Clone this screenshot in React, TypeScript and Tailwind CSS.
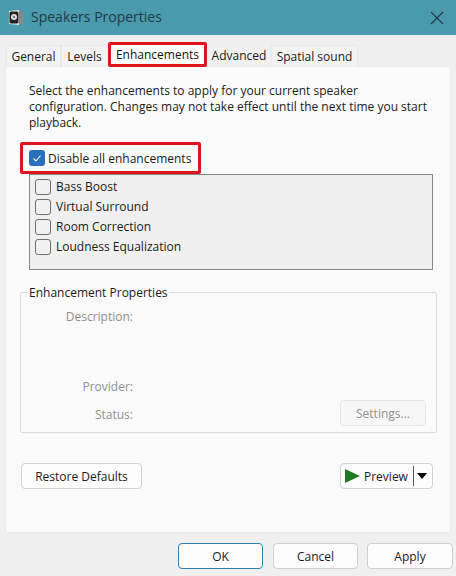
const font = { fontFamily: '"Open Sans", sans-serif' };

function Tab({ label, w }: { label: string; w: string }) {
  return (
    <div className={`${w} h-[21px] pt-[1px] flex items-center justify-center bg-[#f3f3f3] border border-b-0 border-[#e8e8e8] text-[12px] text-[#1a1a1a]`}>
      {label}
    </div>
  );
}

function Box({ label }: { label: string }) {
  return (
    <div className="flex items-center gap-[5px] h-[20px]">
      <div className="w-[16px] h-[16px] rounded-[3px] border border-[#6f6f6f] bg-[#f1f1f1]" />
      <span className="text-[12px] text-[#1a1a1a]">{label}</span>
    </div>
  );
}

function Btn({ label, w, cls = "" }: { label: string; w: string; cls?: string }) {
  return (
    <div className={`${w} h-[26px] pt-[1px] flex items-center justify-center rounded-[4px] border border-[#d0d0d0] bg-[#fdfdfd] text-[12px] text-[#1a1a1a] ${cls}`}>
      {label}
    </div>
  );
}

function Prop({ label, h }: { label: string; h: string }) {
  return (
    <div className={`${h} w-[112px] text-right text-[12px] text-[#8f8f8f]`}>{label}</div>
  );
}

export default function App() {
  return (
    <div className="w-[456px] h-[576px] flex flex-col bg-[#f0f0f0] overflow-hidden" style={font}>
      <div className="h-[35px] shrink-0 bg-[#4a9aae] flex items-center pl-[9px] pr-[12px]">
        <svg width="15" height="17" viewBox="0 0 15 17">
          <path d="M0 2 L10 1 L10 16 L0 15 Z" fill="#e8e8e8" />
          <path d="M10 1 L15 3 L15 14 L10 16 Z" fill="#7d8a8e" />
          <rect x="0.5" y="2.5" width="9" height="12" rx="1.5" fill="#222" />
          <circle cx="5" cy="8" r="3" fill="#dcdcdc" />
          <circle cx="5" cy="8" r="1" fill="#555" />
        </svg>
        <span className="ml-[7px] mb-[2px] text-[14px] text-[#1e3b45] flex-1">Speakers Properties</span>
        <svg width="14" height="14" viewBox="0 0 14 14" stroke="#1f3a44" strokeWidth="1.2" fill="none">
          <path d="M1 1 L13 13 M13 1 L1 13" />
        </svg>
      </div>
      <div className="flex-1 flex flex-col pl-[5px] pr-[5px]">
        <div className="h-[31px] flex items-end pl-[1px] shrink-0">
          <Tab label="General" w="w-[55px]" />
          <Tab label="Levels" w="w-[47px]" />
          <div className="w-[99px] h-[25px] mb-[-1px] flex items-center justify-center border-[3px] border-[#e0141c] rounded-[2px] bg-white text-[12px] text-[#111] z-10">
            Enhancements
          </div>
          <div className="w-[64px] h-[21px] pt-[1px] flex items-center justify-center text-[12px] text-[#1a1a1a]">Advanced</div>
          <Tab label="Spatial sound" w="w-[87px]" />
        </div>
        <div className="h-[467px] shrink-0 bg-[#fafafa] border border-[#ececec] pl-[23px] pt-[16px] flex flex-col">
          <p className="text-[12px] leading-[16px] text-[#1a1a1a] w-[408px]">
            Select the enhancements to apply for your current speaker configuration. Changes may not take effect until the next time you start playback.
          </p>
          <div className="mt-[11px] -ml-[9px] w-[181px] h-[32px] shrink-0 flex items-center gap-[3px] pl-[6px] border-[3px] border-[#e0141c] rounded-[2px]">
            <div className="w-[16px] h-[16px] rounded-[3px] bg-[#2a6fba] flex items-center justify-center">
              <svg width="10" height="10" viewBox="0 0 10 10" fill="none" stroke="#fff" strokeWidth="1.1">
                <path d="M1.5 5.5 L4 8 L8.5 2.5" />
              </svg>
            </div>
            <span className="pt-[1px] text-[12px] text-[#1a1a1a]">Disable all enhancements</span>
          </div>
          <div className="w-[404px] h-[96px] shrink-0 bg-[#f0f0f0] border border-[#868686] pl-[5px] pt-[2px] flex flex-col">
            <Box label="Bass Boost" />
            <Box label="Virtual Surround" />
            <Box label="Room Correction" />
            <Box label="Loudness Equalization" />
          </div>
          <div className="relative mt-[22px] -ml-[9px] w-[417px] h-[141px] shrink-0 border border-[#dcdcdc] rounded-[2px]">
            <span className="absolute -top-[9px] left-[7px] px-[1px] leading-[18px] bg-[#fafafa] text-[12px] text-[#1a1a1a]">Enhancement Properties</span>
            <div className="flex flex-col pt-[15px]">
              <Prop label="Description:" h="h-[70px]" />
              <Prop label="Provider:" h="h-[28px]" />
              <Prop label="Status:" h="h-[16px]" />
            </div>
            <div className="absolute left-[319px] bottom-[6px]">
              <Btn label="Settings..." w="w-[86px]" cls="!bg-[#f7f7f7] !border-[#e6e6e6] !text-[#8f8f8f]" />
            </div>
          </div>
          <div className="mt-[30px] -ml-[8px] w-[412px] flex justify-between">
            <Btn label="Restore Defaults" w="w-[121px]" />
            <div className="w-[93px] h-[26px] flex items-center rounded-[4px] border border-[#d0d0d0] bg-[#fdfdfd] pl-[3px]">
              <svg width="16" height="16" viewBox="0 0 16 16"><path d="M1 1 L16 8 L1 15 Z" fill="#1f7a1f" /></svg>
              <span className="ml-[4px] pt-[1px] text-[12px] text-[#1a1a1a]">Preview</span>
              <div className="ml-[5px] w-[1px] h-[20px] bg-[#555]" />
              <svg className="ml-[3px]" width="10" height="6" viewBox="0 0 10 6"><path d="M0 0 L10 0 L5 6 Z" fill="#000" /></svg>
            </div>
          </div>
        </div>
        <div className="flex-1 flex items-start justify-end gap-[9px] pt-[10px] -mr-[2px]">
          <Btn label="OK" w="w-[85px]" cls="!border-[#2f7fb0] mr-[1px]" />
          <Btn label="Cancel" w="w-[85px]" />
          <Btn label="Apply" w="w-[86px]" />
        </div>
      </div>
    </div>
  );
}
